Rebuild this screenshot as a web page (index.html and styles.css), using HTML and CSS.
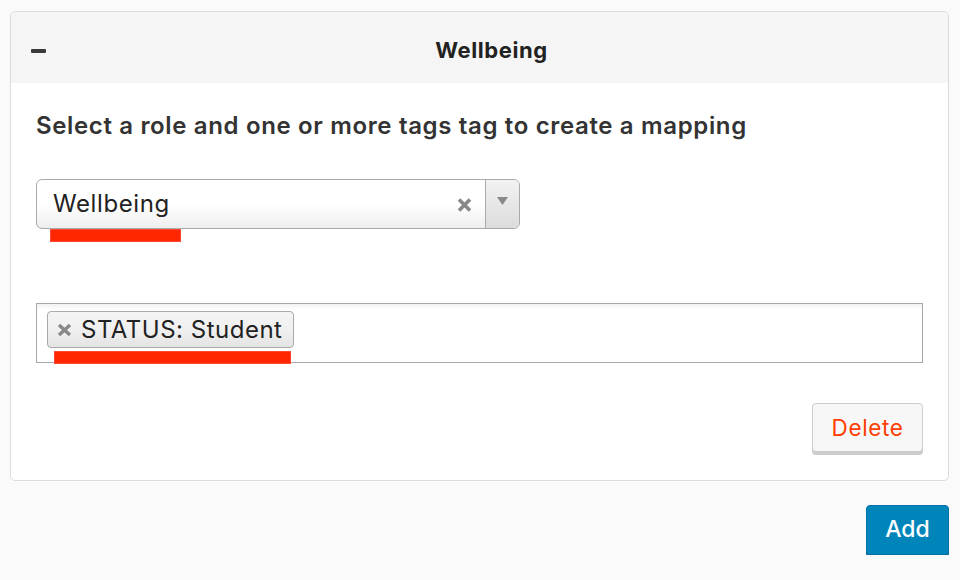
FILE: index.html
```html
<!DOCTYPE html>
<html lang="en">
<head>
<meta charset="utf-8">
<title>Role mapping</title>
<link rel="stylesheet" href="styles.css">
</head>
<body>
<div class="page">
  <section class="card">
    <header class="card-header">
      <span class="collapse" aria-label="Collapse"></span>
      <h2 class="card-title">Wellbeing</h2>
    </header>
    <div class="card-body">
      <p class="intro">Select a role and one or more tags tag to create a mapping</p>
      <div class="select">
        <span class="select-value">Wellbeing</span>
        <span class="select-clear">
          <svg width="15" height="14" viewBox="0 0 15 14"><path d="M2 1.5 L13 12.5 M13 1.5 L2 12.5" stroke="#888" stroke-width="3.6" stroke-linecap="butt"/></svg>
        </span>
        <span class="select-arrow">
          <svg width="11" height="8" viewBox="0 0 11 8"><path d="M0 0 H11 L5.5 8 Z" fill="#888"/></svg>
        </span>
        <span class="mark mark-select"></span>
      </div>
      <div class="tags">
        <span class="tag">
          <span class="tag-remove">
            <svg width="15" height="14" viewBox="0 0 15 14"><path d="M2 2 L13 12 M13 2 L2 12" stroke="#888" stroke-width="3.4"/></svg>
          </span>
          <span class="tag-label">STATUS: Student</span>
        </span>
        <span class="mark mark-tag"></span>
      </div>
      <div class="actions">
        <button class="btn btn-delete">Delete</button>
      </div>
    </div>
  </section>
  <div class="footer">
    <button class="btn btn-add">Add</button>
  </div>
</div>
</body>
</html>
```

FILE: styles.css
```css
html, body {
  margin: 0;
  padding: 0;
  background: #fafafa;
}

body {
  font-family: Inter, "Noto Sans", "Liberation Sans", sans-serif;
  color: #2c2c2c;
}

.page {
  padding: 11px 11px 0 10px;
}

.card {
  background: #fff;
  border: 1px solid #dcdcdc;
  border-radius: 5px;
  overflow: hidden;
}

.card-header {
  height: 71px;
  box-sizing: border-box;
  background: #f5f5f5;
  display: flex;
  align-items: center;
  padding: 4px 11px 0 20px;
}

.collapse {
  width: 15px;
  height: 4px;
  background: #3a3a3a;
  border-radius: 1px;
  margin-top: 2px;
}

.card-title {
  flex: 1;
  margin: 0;
  text-align: center;
  font-size: 22px;
  font-weight: 700;
  letter-spacing: 0.6px;
  color: #222;
  line-height: 30px;
}

.card-body {
  padding: 28px 25px 25px 25px;
}

.intro {
  margin: 0;
  font-size: 24px;
  font-weight: 600;
  letter-spacing: 0.65px;
  line-height: 30px;
  color: #333;
}

.select {
  position: relative;
  margin-top: 38px;
  width: 482px;
  height: 48px;
  border: 1px solid #aaa;
  border-radius: 6px;
  background: linear-gradient(#fff 0%, #fff 50%, #eeeeee 100%);
  display: flex;
  align-items: center;
}

.select-value {
  flex: 1;
  padding-left: 16px;
  font-size: 24px;
  letter-spacing: 0.6px;
  line-height: 48px;
  color: #222;
}

.select-clear {
  display: flex;
  align-items: center;
  margin-right: 13px;
  margin-top: 2px;
}

.select-arrow {
  width: 34px;
  height: 48px;
  border-left: 1px solid #aaa;
  background: linear-gradient(#f2f2f2, #dcdcdc);
  border-radius: 0 5px 5px 0;
  display: flex;
  align-items: center;
  justify-content: center;
  padding-bottom: 6px;
  box-sizing: border-box;
}

.mark {
  position: absolute;
  background: #ff2600;
  box-shadow: inset 0 0 0 1px #ff4a33;
}

.mark-select {
  left: 13px;
  top: 49px;
  width: 131px;
  height: 13px;
}

.tags {
  position: relative;
  margin-top: 74px;
  border: 1px solid #a8a8a8;
  background: linear-gradient(#f1f1f1 0px, #fff 6px, #fff 100%);
  padding: 7px 10px;
  box-sizing: border-box;
  height: 60px;
}

.tag {
  display: inline-flex;
  align-items: center;
  height: 37px;
  box-sizing: border-box;
  padding: 0 11px 0 9px;
  border: 1px solid #aaa;
  border-radius: 4px;
  background: linear-gradient(#f4f4f4 0%, #f0f0f0 50%, #e4e4e4 100%);
}

.tag-remove {
  display: flex;
  align-items: center;
  margin-right: 9px;
  margin-top: 1px;
}

.tag-label {
  font-size: 24px;
  letter-spacing: 0.5px;
  color: #222;
  line-height: 35px;
}

.mark-tag {
  left: 17px;
  top: 47px;
  width: 237px;
  height: 13px;
}

.actions {
  display: flex;
  justify-content: flex-end;
  margin-top: 40px;
}

.btn {
  font-family: Inter, "Noto Sans", "Liberation Sans", sans-serif;
  cursor: pointer;
  box-sizing: border-box;
}

.btn-delete {
  width: 111px;
  height: 49px;
  background: #f7f7f7;
  border: 1px solid #cccccc;
  border-radius: 4px;
  box-shadow: 0 3px 0 #cccccc;
  color: #ff3d00;
  font-size: 22.5px;
  letter-spacing: 0.6px;
  padding: 0;
  margin-bottom: 3px;
}

.footer {
  display: flex;
  justify-content: flex-end;
  margin-top: 24px;
}

.btn-add {
  width: 83px;
  height: 50px;
  background: #0085ba;
  border: 1px solid #0073aa;
  border-radius: 4px;
  box-shadow: 0 2px 0 #006799;
  color: #fff;
  font-size: 23px;
  font-weight: 500;
  padding: 0 0 2px 0;
}
```
